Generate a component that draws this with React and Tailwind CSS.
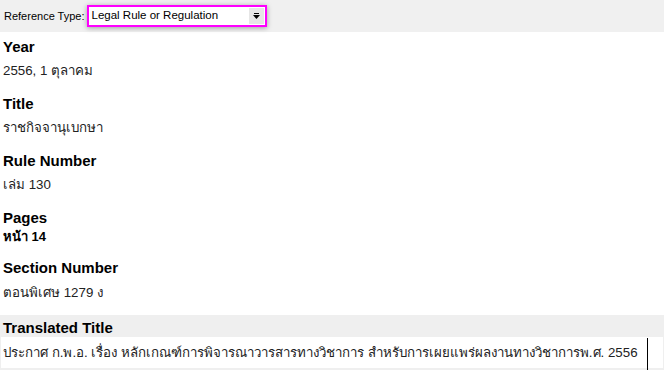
import React from "react";

const sans = { fontFamily: '"Liberation Sans", Arial, sans-serif' };

function Field({ label, value, bold }) {
  return (
    <div className="px-[3px] pb-[16px]">
      <div className="text-[15px] font-bold leading-[18px] text-black">{label}</div>
      {bold ? (
        <div className="mt-[2px] text-[13px] font-bold leading-[16px] text-black">{value}</div>
      ) : (
        <div className="mt-[7px] text-[13.3px] leading-[16px] text-[#222]">{value}</div>
      )}
    </div>
  );
}

export default function App() {
  return (
    <div className="w-[664px] h-[370px] overflow-hidden bg-white" style={sans}>
      {/* reference type bar */}
      <div className="h-[32px] bg-[#f0f0f0] flex items-center pl-[4px] gap-[2px]">
        <span className="text-[11px] text-black mt-[1px]">Reference Type:</span>
        <div className="relative w-[180px] h-[22px] mb-[1px] bg-white border-2 border-[#f0f] shadow-[0_1px_5px_rgba(0,0,0,0.35)] flex items-center">
          <span className="pl-[3px] text-[11.5px] text-black">Legal Rule or Regulation</span>
          <div className="absolute right-[1px] top-[1px] w-[15px] h-[16px] bg-[#e6e6e6] flex flex-col items-center justify-center">
            <div className="w-[5px] h-[1px] bg-black mb-[1px]" />
            <svg width="7" height="4" viewBox="0 0 7 4">
              <path d="M0 0h7L3.5 4z" fill="#000" />
            </svg>
          </div>
        </div>
      </div>

      <div className="pt-[6px]">
        <Field label="Year" value="2556, 1 ตุลาคม" />
        <Field label="Title" value="ราชกิจจานุเบกษา" />
        <Field label="Rule Number" value="เล่ม 130" />
        <Field label="Pages" value="หน้า 14" bold />
        <div className="px-[3px] pb-[14px] -mt-[2px]">
          <div className="text-[15px] font-bold leading-[18px] text-black">Section Number</div>
          <div className="mt-[8px] text-[13.3px] leading-[16px] text-[#222]">ตอนพิเศษ 1279 ง</div>
        </div>
      </div>

      {/* translated title */}
      <div className="bg-[#efefef] pt-[4px] pb-[2px] px-[1px]">
        <div className="px-[2px] text-[15px] font-bold leading-[18px] text-black">Translated Title</div>
        <div className="relative h-[31px] bg-white flex items-center pl-[2px]">
          <span className="text-[13.3px] leading-[16px] text-[#222]">
            ประกาศ ก.พ.อ. เรื่อง หลักเกณฑ์การพิจารณาวารสารทางวิชาการ สำหรับการเผยแพร่ผลงานทางวิชาการพ.ศ. 2556
          </span>
          <div className="absolute left-[646px] top-[1px] w-[1px] h-[32px] bg-black" />
        </div>
      </div>
    </div>
  );
}
